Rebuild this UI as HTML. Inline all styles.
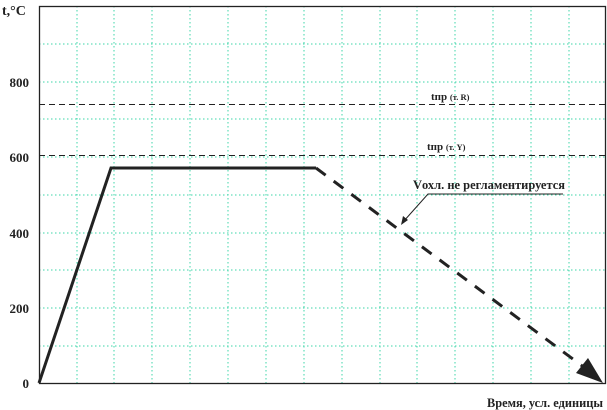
<!DOCTYPE html>
<html><head><meta charset="utf-8"><style>
html,body{margin:0;padding:0;background:#fff;width:607px;height:410px;overflow:hidden}
text{font-family:"Liberation Serif","DejaVu Serif",serif;font-weight:bold;fill:#222}
</style></head><body>
<svg width="607" height="410" xmlns="http://www.w3.org/2000/svg">
<g stroke="#3cd6a8" stroke-width="1" stroke-dasharray="1.5,2.5">
<line x1="77" y1="6" x2="77" y2="383"/><line x1="114" y1="6" x2="114" y2="383"/>
<line x1="152" y1="6" x2="152" y2="383"/><line x1="190" y1="6" x2="190" y2="383"/>
<line x1="228" y1="6" x2="228" y2="383"/><line x1="266" y1="6" x2="266" y2="383"/>
<line x1="304" y1="6" x2="304" y2="383"/><line x1="342" y1="6" x2="342" y2="383"/>
<line x1="380" y1="6" x2="380" y2="383"/><line x1="417" y1="6" x2="417" y2="383"/>
<line x1="455" y1="6" x2="455" y2="383"/><line x1="493" y1="6" x2="493" y2="383"/>
<line x1="531" y1="6" x2="531" y2="383"/><line x1="569" y1="6" x2="569" y2="383"/>
<line x1="39" y1="44" x2="605" y2="44"/><line x1="39" y1="82" x2="605" y2="82"/>
<line x1="39" y1="119" x2="605" y2="119"/><line x1="39" y1="157" x2="605" y2="157"/>
<line x1="39" y1="195" x2="605" y2="195"/><line x1="39" y1="233" x2="605" y2="233"/>
<line x1="39" y1="270" x2="605" y2="270"/><line x1="39" y1="308" x2="605" y2="308"/>
<line x1="39" y1="346" x2="605" y2="346"/>
</g>
<rect x="39.5" y="6.5" width="566" height="377" fill="none" stroke="#222" stroke-width="1.3"/>
<g stroke="#222" stroke-width="1" stroke-dasharray="6,4">
<line x1="39" y1="104.5" x2="605" y2="104.5"/><line x1="39" y1="155.5" x2="605" y2="155.5"/>
</g>
<polyline points="39,383 111,168 316,168" fill="none" stroke="#222" stroke-width="3"/>
<line x1="316" y1="168" x2="585" y2="368" stroke="#222" stroke-width="3" stroke-dasharray="12,10"/>
<polygon points="603,383 576,373 588,358" fill="#222"/>
<polyline points="563,194 428,194 403,222" fill="none" stroke="#222" stroke-width="1"/>
<polygon points="401,225 403,216 408,220" fill="#222"/>
<g font-size="13">
<text x="2" y="15" font-size="14">t,°C</text>
<text x="29" y="87" text-anchor="end">800</text>
<text x="29" y="162" text-anchor="end">600</text>
<text x="29" y="238" text-anchor="end">400</text>
<text x="29" y="313" text-anchor="end">200</text>
<text x="29" y="388" text-anchor="end">0</text>
<text x="413" y="189" textLength="152" lengthAdjust="spacingAndGlyphs">Vохл. не регламентируется</text>
<text x="487" y="407" textLength="116" lengthAdjust="spacingAndGlyphs">Время, усл. единицы</text>
<text x="431" y="100" font-size="11">tпр <tspan font-size="8.5">(т. R)</tspan></text>
<text x="427" y="150" font-size="11">tпр <tspan font-size="8.5">(т. Y)</tspan></text>
</g>
</svg>
</body></html>
